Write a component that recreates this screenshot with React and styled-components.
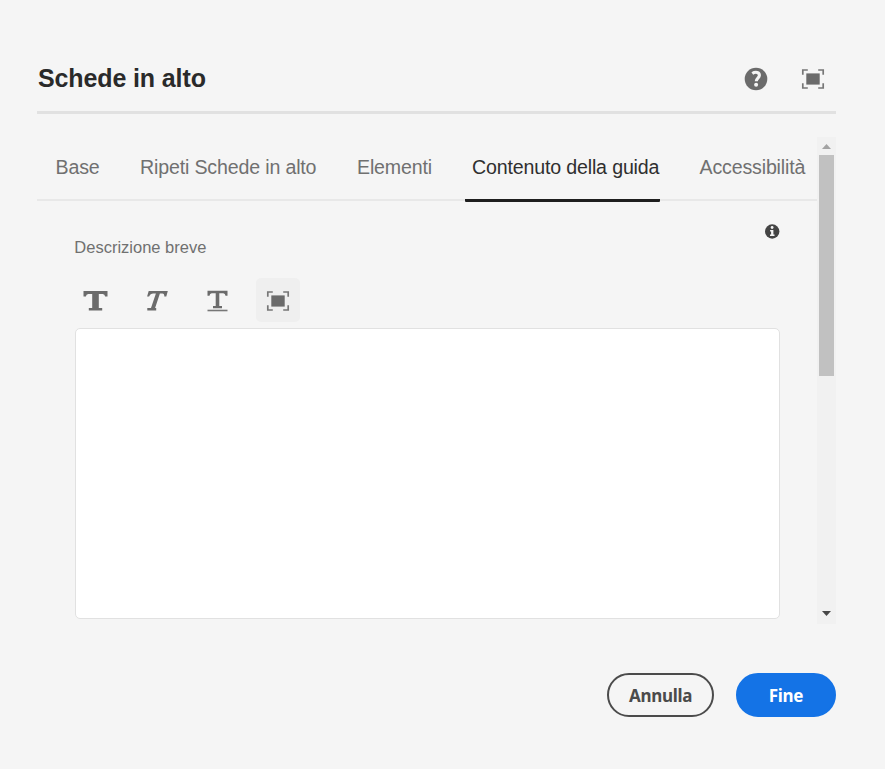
import React from 'react';
import styled, { createGlobalStyle } from 'styled-components';

const GlobalStyle = createGlobalStyle`
  *, *::before, *::after { box-sizing: border-box; }
  body {
    margin: 0;
    background: #f5f5f5;
    font-family: "Liberation Sans", Arial, sans-serif;
    overflow: hidden;
  }
`;

const Dialog = styled.main`
  display: flex;
  flex-direction: column;
  width: 885px;
  height: 769px;
  padding: 45px 49px 52px 37px;
  background: #f5f5f5;
`;

const Header = styled.header`
  display: flex;
  align-items: center;
  justify-content: space-between;
  width: 799px;
  height: 69px;
  padding: 0 11.5px 0 1px;
  border-bottom: 3px solid #e1e1e1;
`;

const Title = styled.h1`
  margin: 0;
  font-size: 25px;
  line-height: 30px;
  letter-spacing: -0.12px;
  color: #2a2a2a;
`;

const HeaderActions = styled.div`
  display: flex;
  align-items: center;
  gap: 33px;
  padding-top: 2px;
`;

const IconButton = styled.button`
  display: flex;
  padding: 0;
  border: 0;
  background: none;
`;

const ScrollArea = styled.div`
  display: flex;
  width: 799px;
  height: 487px;
  margin-top: 23px;
`;

const Content = styled.div`
  width: 780px;
`;

const TabList = styled.nav`
  display: flex;
  align-items: flex-start;
  width: 780px;
  height: 64px;
  padding-left: 11px;
  gap: 25.5px;
  border-bottom: 2px solid #e8e8e8;
`;

const Tab = styled.button`
  flex: none;
  width: ${(p) => p.$width}px;
  height: 65px;
  padding: 0 0 2px 7.5px;
  border: 0;
  border-bottom: 3px solid ${(p) => (p.$active ? '#1e1e1e' : 'transparent')};
  border-radius: 1px;
  background: none;
  font: 19.6px/22px "Liberation Sans", Arial, sans-serif;
  letter-spacing: -0.16px;
  text-align: left;
  white-space: nowrap;
  color: ${(p) => (p.$active ? '#2f2f2f' : '#707070')};

  &:last-child {
    margin-left: 7px;
  }
`;

const Panel = styled.section`
  display: flex;
  flex-direction: column;
  padding: 23px 37px 0;
`;

const InfoRow = styled.div`
  display: flex;
  justify-content: flex-end;
  height: 14px;
`;

const FieldLabel = styled.label`
  padding-left: 0.3px;
  font-size: 16.5px;
  line-height: 18px;
  color: #707070;
`;

const Toolbar = styled.div`
  display: flex;
  height: 44px;
  margin: 22px 0 6px -1px;
  gap: 17px;
`;

const ToolButton = styled.button`
  display: flex;
  align-items: center;
  justify-content: center;
  width: 44px;
  height: 44px;
  padding: 1px 0 0;
  border: 0;
  border-radius: 5px;
  background: ${(p) => (p.$active ? '#efefef' : 'transparent')};
`;

const Editor = styled.textarea`
  display: block;
  width: 705px;
  height: 291px;
  margin: 0 0 0 1px;
  border: 1px solid #e1e1e1;
  border-radius: 5px;
  background: #fff;
  resize: none;
`;

const ScrollTrack = styled.div`
  display: flex;
  flex-direction: column;
  align-items: center;
  justify-content: space-between;
  width: 19px;
  height: 487px;
  padding: 7px 0 8px;
  background: #f1f1f1;
`;

const ScrollThumb = styled.div`
  width: 15px;
  height: 221px;
  margin: 6px 0 auto;
  background: #c1c1c1;
`;

const Arrow = styled.svg`
  display: block;
  flex: none;
`;

const Footer = styled.footer`
  display: flex;
  justify-content: flex-end;
  width: 799px;
  margin-top: 49px;
  gap: 22px;
`;

const PillButton = styled.button`
  width: ${(p) => (p.$primary ? 100 : 107)}px;
  height: 44px;
  padding: 1px 0 0;
  border: 2px solid ${(p) => (p.$primary ? '#1473e6' : '#4b4b4b')};
  border-radius: 22px;
  background: ${(p) => (p.$primary ? '#1473e6' : 'transparent')};
  color: ${(p) => (p.$primary ? '#fff' : '#4b4b4b')};
  font: 700 17px/22px "Noto Sans", sans-serif;
  letter-spacing: -0.3px;
`;

const HelpIcon = () => (
  <svg width="24" height="24" viewBox="0 0 24 24">
    <circle cx="12" cy="12" r="11.3" fill="#6b6b6b" />
    <path d="M8.3 6.5C11.8 4.2 15.4 5.4 15.4 8.2C15.4 11 12.3 11.1 12.3 14.2" fill="none" stroke="#f5f5f5" strokeWidth="3.1" />
    <circle cx="12.1" cy="17.8" r="2" fill="#f5f5f5" />
  </svg>
);

const FullscreenIcon = () => (
  <svg width="24" height="22" viewBox="0 0 24 22">
    <path d="M1.8 6.8V2H6.8M17.2 2H22.2V6.8M22.2 15.2V20H17.2M6.8 20H1.8V15.2" fill="none" stroke="#777" strokeWidth="1.7" />
    <path d="M5.3 5.4H18.7V16.6H5.3Z" fill="#6b6b6b" />
  </svg>
);

const InfoIcon = () => (
  <svg width="15" height="15" viewBox="0 0 15 15">
    <circle cx="7.2" cy="7.5" r="7.2" fill="#444" />
    <circle cx="7.1" cy="3.5" r="1.4" fill="#f5f5f5" />
    <path d="M5.1 6.1H8.4V10.6H9.5V12H5V10.6H6.1V7.4H5.1Z" fill="#f5f5f5" />
  </svg>
);

const BoldIcon = () => (
  <svg width="24" height="20" viewBox="0 0 24 20" overflow="visible">
    <path transform="translate(.5 0)" d="M0 0H24V5.5H21.6Q21.4 3 19.2 3H15.3V17H18.7V19.5H5.3V17H8.7V3H4.8Q2.6 3 2.4 5.5H0Z" fill="#6b6b6b" />
  </svg>
);

const ItalicIcon = () => (
  <svg width="22" height="20" viewBox="0 0 22 20" overflow="visible">
    <path transform="translate(1.3 0)" d="M2.4 0H21.5L20 5.6H18Q18.2 2.6 16 2.6H13.6L8.8 17.1H9.9V19.5H1V17.1H4.7L9.6 2.6H7Q4 2.6 2.8 5.6H.8Z" fill="#6b6b6b" />
  </svg>
);

const UnderlineIcon = () => (
  <svg width="20" height="22" viewBox="0 0 20 22" overflow="visible">
    <g transform="translate(.5 0)">
      <path d="M0 .8H20V5.8H18Q17.8 3.3 15.8 3.3H11.8V16H14.5V18.2H5.5V16H8.2V3.3H4.2Q2.2 3.3 2 5.8H0Z" fill="#6b6b6b" />
      <path d="M0 19.7H20V21.3H0Z" fill="#777" />
    </g>
  </svg>
);

const tabs = [
  { label: 'Base', width: 59 },
  { label: 'Ripeti Schede in alto', width: 191.5 },
  { label: 'Elementi', width: 89.5 },
  { label: 'Contenuto della guida', width: 195, active: true },
  { label: 'Accessibilità', width: 120 },
];

const tools = [
  { label: 'Grassetto', Icon: BoldIcon },
  { label: 'Corsivo', Icon: ItalicIcon },
  { label: 'Sottolineato', Icon: UnderlineIcon },
  { label: 'Schermo intero', Icon: FullscreenIcon, active: true },
];

export default function App() {
  return (
    <>
      <GlobalStyle />
      <Dialog>
        <Header>
          <Title>Schede in alto</Title>
          <HeaderActions>
            <IconButton aria-label="Aiuto"><HelpIcon /></IconButton>
            <IconButton aria-label="Schermo intero"><FullscreenIcon /></IconButton>
          </HeaderActions>
        </Header>
        <ScrollArea>
          <Content>
            <TabList>
              {tabs.map(({ label, width, active }) => (
                <Tab key={label} $width={width} $active={active}>{label}</Tab>
              ))}
            </TabList>
            <Panel>
              <InfoRow><InfoIcon /></InfoRow>
              <FieldLabel htmlFor="description">Descrizione breve</FieldLabel>
              <Toolbar>
                {tools.map(({ label, Icon, active }) => (
                  <ToolButton key={label} aria-label={label} $active={active}><Icon /></ToolButton>
                ))}
              </Toolbar>
              <Editor id="description" />
            </Panel>
          </Content>
          <ScrollTrack>
            <Arrow width="9" height="5"><path d="M0 5L4.5 0L9 5Z" fill="#a3a3a3" /></Arrow>
            <ScrollThumb />
            <Arrow width="9" height="5"><path d="M0 0L4.5 5L9 0Z" fill="#484848" /></Arrow>
          </ScrollTrack>
        </ScrollArea>
        <Footer>
          <PillButton>Annulla</PillButton>
          <PillButton $primary>Fine</PillButton>
        </Footer>
      </Dialog>
    </>
  );
}
